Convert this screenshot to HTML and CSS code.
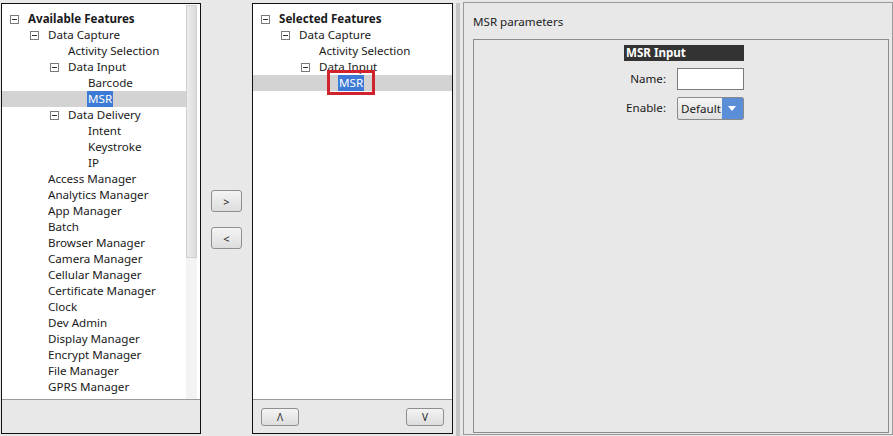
FILE: index.html
```html
<!DOCTYPE html>
<html lang="en">
<head>
    <meta charset="UTF-8">
    <title>Feature Selection</title>
    <link rel="stylesheet" href="styles.css">
</head>
<body>
<div class="window">
    <div class="panel first">
        <div class="tree-wrap">
            <ul class="tree">
                <li class="node l0 root"><span class="box"></span><span class="label">Available Features</span></li>
                <li class="node l1"><span class="box"></span><span class="label">Data Capture</span></li>
                <li class="leaf l2"><span class="label">Activity Selection</span></li>
                <li class="node l2"><span class="box"></span><span class="label">Data Input</span></li>
                <li class="leaf l3"><span class="label">Barcode</span></li>
                <li class="leaf l3 current"><span class="label sel">MSR</span></li>
                <li class="node l2"><span class="box"></span><span class="label">Data Delivery</span></li>
                <li class="leaf l3"><span class="label">Intent</span></li>
                <li class="leaf l3"><span class="label">Keystroke</span></li>
                <li class="leaf l3"><span class="label">IP</span></li>
                <li class="leaf l1"><span class="label">Access Manager</span></li>
                <li class="leaf l1"><span class="label">Analytics Manager</span></li>
                <li class="leaf l1"><span class="label">App Manager</span></li>
                <li class="leaf l1"><span class="label">Batch</span></li>
                <li class="leaf l1"><span class="label">Browser Manager</span></li>
                <li class="leaf l1"><span class="label">Camera Manager</span></li>
                <li class="leaf l1"><span class="label">Cellular Manager</span></li>
                <li class="leaf l1"><span class="label">Certificate Manager</span></li>
                <li class="leaf l1"><span class="label">Clock</span></li>
                <li class="leaf l1"><span class="label">Dev Admin</span></li>
                <li class="leaf l1"><span class="label">Display Manager</span></li>
                <li class="leaf l1"><span class="label">Encrypt Manager</span></li>
                <li class="leaf l1"><span class="label">File Manager</span></li>
                <li class="leaf l1"><span class="label">GPRS Manager</span></li>
            </ul>
            <div class="scrollbar"><div class="thumb"></div></div>
        </div>
        <div class="panel-foot"></div>
    </div>

    <div class="mover">
        <button class="btn move">&gt;</button>
        <button class="btn move">&lt;</button>
    </div>

    <div class="panel">
        <div class="tree-wrap">
            <ul class="tree">
                <li class="node l0 root"><span class="box"></span><span class="label">Selected Features</span></li>
                <li class="node l1"><span class="box"></span><span class="label">Data Capture</span></li>
                <li class="leaf l2"><span class="label">Activity Selection</span></li>
                <li class="node l2"><span class="box"></span><span class="label">Data Input</span></li>
                <li class="leaf l3 current"><span class="label sel marked">MSR</span></li>
            </ul>
        </div>
        <div class="panel-foot order">
            <button class="btn order-btn">&#x39B;</button>
            <button class="btn order-btn">V</button>
        </div>
    </div>

    <div class="splitter"></div>

    <div class="params">
        <div class="params-title">MSR parameters</div>
        <div class="group">
            <div class="form">
                <div class="form-head">MSR Input</div>
                <label class="form-label" for="msrName">Name:</label>
                <input class="form-input" type="text" id="msrName">
                <label class="form-label" for="msrEnable">Enable:</label>
                <div class="select" id="msrEnable">
                    <span class="select-value">Default</span>
                    <span class="select-arrow"></span>
                </div>
            </div>
        </div>
    </div>
</div>
</body>
</html>
```

FILE: styles.css
```css
html, body { margin: 0; padding: 0; }
body { background: #e8e8e8; font-family: "Noto Sans", "Liberation Sans", sans-serif; font-size: 11.6px; color: #1a1a1a; }
.window { display: flex; width: 893px; height: 436px; padding-top: 3px; box-sizing: border-box; }

.panel { width: 201px; height: 431px; border: 1px solid #111; box-sizing: border-box; display: flex; flex-direction: column; background: #e8e8e8; flex: none; }
.panel.first { width: 200px; margin-left: 1px; }
.tree-wrap { height: 395px; background: #fff; display: flex; border-bottom: 1px solid #9a9a9a; }
.tree { list-style: none; margin: 0; padding: 7px 0 0; flex: 1; }
.tree li { height: 16px; line-height: 16px; display: flex; align-items: center; white-space: nowrap; }
.tree li.current { background: #d3d3d3; }
.tree .l0 { padding-left: 8px; }
.tree .l1 { padding-left: 28px; }
.tree .l2 { padding-left: 48px; }
.tree .l3 { padding-left: 68px; }
.tree .leaf { padding-left: 25px; }
.tree .leaf.l1 { padding-left: 45px; }
.tree .leaf.l2 { padding-left: 65px; }
.tree .leaf.l3 { padding-left: 85px; }
.box { width: 7px; height: 7px; border: 1px solid #7a7a7a; margin-right: 8px; position: relative; flex: none; }
.box::after { content: ""; position: absolute; left: 1px; right: 1px; top: 3px; height: 1px; background: #333; }
.root .label { font-weight: bold; }
.label { padding: 0 1px; }
.sel { background: #3d7ad6; color: #fff; }
.marked { position: relative; }
.marked::after { content: ""; position: absolute; left: -11px; right: -11px; top: -5px; bottom: -4px; border: 3px solid #d0232e; }

.scrollbar { width: 11px; margin: 1px 3px 0 0; background: #f3f3f3; }
.thumb { height: 253px; background: linear-gradient(to right, #ececec, #dcdcdc); border: 1px solid #cfcfcf; box-sizing: border-box; }

.panel-foot { flex: 1; }
.order { display: flex; justify-content: space-between; align-items: flex-start; padding: 8px 8px 0; }

.btn { font-family: inherit; background: linear-gradient(#f4f4f4, #dddddd); border: 1px solid #8f8f8f; border-radius: 3px; padding: 0; color: #222; cursor: pointer; }
.mover { width: 51px; flex: none; display: flex; flex-direction: column; align-items: center; padding-top: 187px; gap: 15px; box-sizing: border-box; }
.move { width: 31px; height: 22px; font-size: 11px; }
.order-btn { width: 38px; height: 18px; font-size: 10px; line-height: 14px; }

.splitter { width: 4px; flex: none; margin: 0 3px 0 3px; background-image: radial-gradient(#9a9a9a 0.6px, transparent 0.8px); background-size: 2px 2px; }

.params { flex: 1; height: 433px; margin-top: -1px; border: 1px solid #9a9a9a; box-sizing: border-box; padding: 0 3px 1px 9px; display: flex; flex-direction: column; }
.params-title { height: 36px; line-height: 38px; color: #222; }
.group { flex: 1; border: 1px solid #8c8c8c; padding: 5px 0 0 150px; }
.form { display: grid; grid-template-columns: 42px 67px; column-gap: 11px; row-gap: 7px; width: 120px; }
.form-head { grid-column: 1 / 3; background: #333; color: #fff; font-weight: bold; height: 16px; line-height: 16px; padding-left: 2px; }
.form-label { text-align: right; line-height: 22px; }
.form-input { width: 67px; height: 22px; box-sizing: border-box; border: 1px solid #7a7a7a; margin: 0; }
.select { display: flex; height: 23px; border: 1px solid #8a8a8a; border-radius: 2px; box-sizing: border-box; background: linear-gradient(#f5f5f5, #e0e0e0); overflow: hidden; }
.select-value { flex: 1; line-height: 21px; padding-left: 3px; white-space: nowrap; overflow: hidden; }
.select-arrow { width: 21px; flex: none; background: #5a8fd8; position: relative; }
.select-arrow::after { content: ""; position: absolute; left: 6px; top: 8px; border-left: 4px solid transparent; border-right: 4px solid transparent; border-top: 5px solid #fff; }
```
